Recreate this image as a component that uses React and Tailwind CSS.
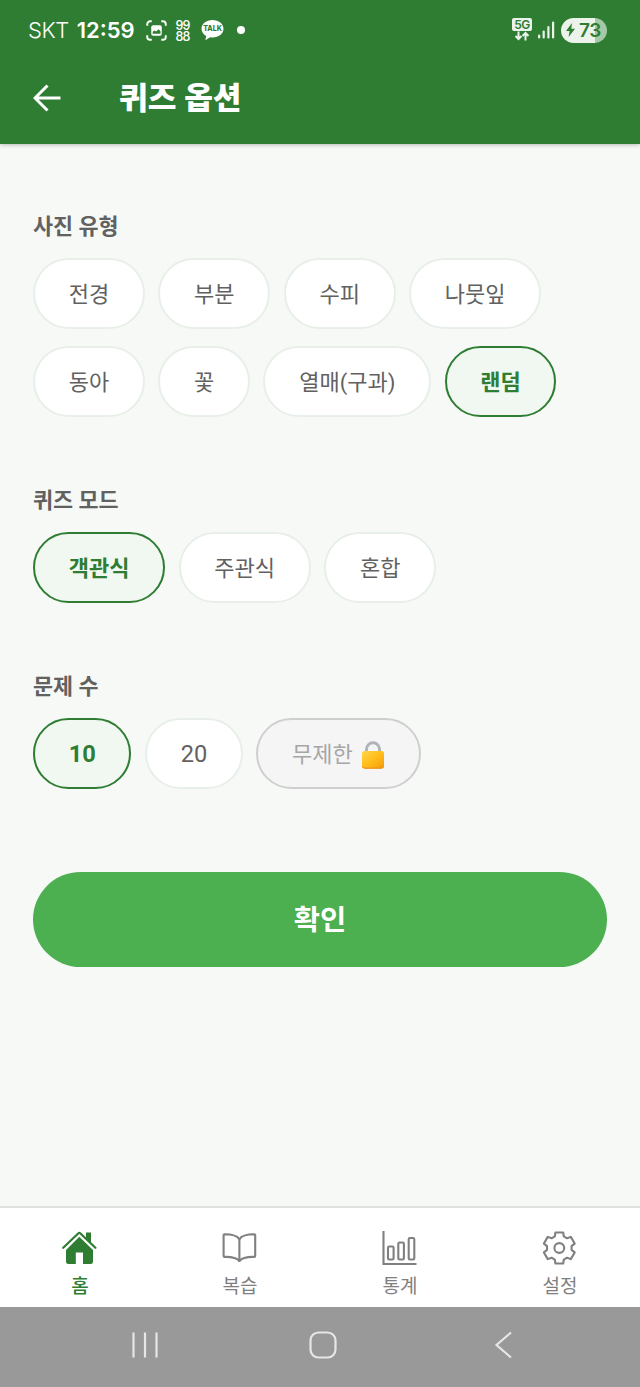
import React, { useState } from 'react'

const PHOTO_TYPES = ['전경', '부분', '수피', '나뭇잎', '동아', '꽃', '열매(구과)', '랜덤']
const QUIZ_MODES = ['객관식', '주관식', '혼합']
const COUNTS = ['10', '20']

// outline of a six-toothed gear around (17.3, 18)
const GEAR_POINTS = [0, 60, 120, 180, 240, 300]
    .flatMap((a) => [[a - 21.5, 12.4], [a - 14, 16], [a + 14, 16], [a + 21.5, 12.4]])
    .map(([deg, r]) => {
        const rad = (deg * Math.PI) / 180
        return `${(17.3 + r * Math.sin(rad)).toFixed(2)},${(18 - r * Math.cos(rad)).toFixed(2)}`
    })
    .join(' ')

const HomeIcon = () => (
    <svg width="36" height="36" viewBox="0 0 36 36" fill="currentColor">
        <path d="M24 2.500h5v11l-5-4.500z" />
        <path d="M1.200 17.800 16.400 3.200q.9-.8 1.800 0L33.400 17.800" fill="none" stroke="currentColor" strokeWidth="2.200" strokeLinecap="round" />
        <path d="M17.300 6.800 31 20v11.700a2.300 2.300 0 0 1-2.300 2.300H21V22.500h-7.200V34H6.300A2.300 2.300 0 0 1 4 31.700V20z" />
    </svg>
)

const BookIcon = () => (
    <svg width="36" height="36" viewBox="0 0 36 36" fill="none" stroke="currentColor" strokeWidth="2.100" strokeLinejoin="round" strokeLinecap="round">
        <path d="M17.400 9.300C15.200 5.600 9.500 4.300 2.500 4.300q-.9 0-.9.9V26q0 .9.9.9C9 26.700 14.500 27.500 17.400 31c2.900-3.500 8.400-4.300 14.900-4.100q.9 0 .9-.9V5.200q0-.9-.9-.9C25.300 4.300 19.600 5.600 17.400 9.300z" />
        <path d="M17.400 9.300V31" />
    </svg>
)

const ChartIcon = () => (
    <svg width="36" height="36" viewBox="0 0 36 36" fill="none" stroke="currentColor" strokeWidth="2.100">
        <path d="M1.500 1v33h33" />
        <rect x="6" y="16.500" width="5.600" height="13" rx="1.300" />
        <rect x="16.300" y="12.500" width="5.600" height="17" rx="1.300" />
        <rect x="26.700" y="8" width="5.600" height="21.500" rx="1.300" />
    </svg>
)

const GearIcon = () => (
    <svg width="36" height="36" viewBox="0 0 36 36" fill="none" stroke="currentColor" strokeWidth="2.100" strokeLinejoin="round">
        <polygon points={GEAR_POINTS} />
        <circle cx="17.300" cy="18" r="4.900" />
    </svg>
)

const TABS = [
    { label: '홈', Icon: HomeIcon },
    { label: '복습', Icon: BookIcon },
    { label: '통계', Icon: ChartIcon },
    { label: '설정', Icon: GearIcon },
]

const StatusBar = () => (
    <div className="flex h-[60px] items-center pl-[28px] pr-[33px] text-white">
        <span className="font-['Inter'] text-[22px] font-light leading-none tracking-[-0.5px]">SKT</span>
        <span className="ml-[8px] font-['Inter'] text-[22px] font-semibold leading-none">12:59</span>

        {/* screen capture */}
        <svg className="ml-[11px]" width="21" height="21" viewBox="0 0 22 22" fill="none">
            <path d="M1.3 6V4.3a3 3 0 0 1 3-3H6M16 1.3h1.7a3 3 0 0 1 3 3V6M20.7 16v1.7a3 3 0 0 1-3 3H16M6 20.7H4.3a3 3 0 0 1-3-3V16"
                stroke="currentColor" strokeWidth="2" />
            <rect x="5.5" y="5.500" width="11" height="11" rx="2" fill="currentColor" />
            <path d="M7 14.500v-2.200l2-1.300 1.600 1 2.600-2.200 2 2v2.700z" fill="#2e7d32" />
        </svg>

        <span className="ml-[8px] flex w-[16px] flex-col items-center pt-[2px] font-['Inter'] text-[12.500px] font-medium leading-[11.500px] tracking-[-0.700px]">
            <span>99</span>
            <span>88</span>
        </span>

        {/* talk bubble */}
        <svg className="ml-[10px]" width="23" height="22" viewBox="0 0 23 22">
            <path d="M11.5 1C5.4 1 .5 4.8.5 9.700c0 3.200 2 5.800 4.700 7.300l-.8 4.200 4.700-3c.8.1 1.600.2 2.400.2 6.100 0 11-3.800 11-8.700S17.600 1 11.500 1z" fill="currentColor" />
            <text x="11.500" y="12.300" textAnchor="middle" fill="#2e7d32" className="font-['Inter'] text-[7px] font-extrabold">TALK</text>
        </svg>
        <span className="ml-[13px] size-[8px] rounded-full bg-white" />

        <div className="ml-auto flex items-center">
            <div className="flex flex-col items-center pb-[1px]">
                <span className="flex h-[13px] w-[20px] items-center justify-center rounded-[2px] bg-[#ebf3eb] font-['Inter'] text-[12px] font-semibold leading-none tracking-[-0.500px] text-[#2e7d32]">
                    5G
                </span>
                <svg width="16" height="10" viewBox="0 0 16 10" fill="none" stroke="#ebf3eb" strokeWidth="2">
                    <path d="M4.500 0.500v7.500M1.500 5l3 3 3-3M11.500 9.500V2M8.500 5l3-3 3 3" />
                </svg>
            </div>
            <svg className="ml-[6px]" width="18" height="18" viewBox="0 0 18 18" fill="#ebf3eb">
                <rect x="0" y="13.500" width="2.200" height="4" rx="1" />
                <rect x="4.600" y="9.500" width="2.200" height="8" rx="1" />
                <rect x="9.300" y="5" width="2.200" height="12.500" rx="1" />
                <rect x="14" y="0.500" width="2.200" height="17" rx="1" />
            </svg>
            <div className="ml-[5px] flex h-[25px] w-[46px] items-center gap-[4px] rounded-full bg-[linear-gradient(90deg,#ebf3eb_73%,#a5c9a7_73%)] pl-[5px] text-[#2e7d32]">
                <svg width="9" height="14" viewBox="0 0 9 14" fill="currentColor">
                    <path d="M6 0 0 8h3.600L2.600 14 9 5.700H5.300z" />
                </svg>
                <span className="font-['Inter'] text-[19px] font-semibold leading-none tracking-[-0.500px]">73</span>
            </div>
        </div>
    </div>
)

const Chip = ({ selected, locked, onClick, children }) => {
    let look = 'border-[#e8efe8] bg-white text-[#616161]'
    if (selected) look = 'border-[#2e7d32] bg-[#f1f8f2] font-bold text-[#2e7d32]'
    if (locked) look = 'border-[#cfcfcf] bg-[#f5f5f5] text-[#a6a6a6]'

    return (
        <button
            onClick={onClick}
            disabled={locked}
            className={`flex h-[71px] items-center rounded-[36px] border-2 px-[33.700px] pt-[2px] text-[22px] leading-none ${look}`}>
            {children}
        </button>
    )
}

const Section = ({ title, children }) => (
    <section>
        <h2 className="text-[21.800px] font-bold leading-[32px] text-[#616161]">{title}</h2>
        <div className="mt-[15px] flex flex-wrap gap-x-[13.500px] gap-y-[17px]">{children}</div>
    </section>
)

const LockIcon = () => (
    <svg width="24" height="30" viewBox="0 0 24 30">
        <defs>
            <linearGradient id="lockBody" x1="0" y1="0" x2="1" y2="1">
                <stop offset="0" stopColor="#ffd54a" />
                <stop offset="0.500" stopColor="#ffbd18" />
                <stop offset="1" stopColor="#f59a0c" />
            </linearGradient>
        </defs>
        <path d="M5.500 13V9.300a6.500 6.500 0 0 1 13 0V13" fill="none" stroke="#b0b4b8" strokeWidth="3" />
        <rect x="1" y="11" width="22" height="17.500" rx="2.500" fill="url(#lockBody)" />
        <path d="M1.500 26.200q.5 2 2.500 2h16q2 0 2.500-2" fill="none" stroke="#e8890c" />
    </svg>
)

const App = () => {
    const [photoType, setPhotoType] = useState('랜덤')
    const [mode, setMode] = useState('객관식')
    const [count, setCount] = useState('10')
    const [tab, setTab] = useState('홈')

    return (
        <div className="flex h-[1387px] w-[640px] flex-col bg-[#f7f9f7] font-['Roboto','Noto_Sans_CJK_KR',sans-serif]">
            <header className="h-[144px] bg-[#2e7d32] shadow-[0_1px_4px_rgba(0,0,0,0.250)]">
                <StatusBar />
                <div className="flex h-[75px] items-center pl-[33px] text-white">
                    <svg width="29" height="28" viewBox="0 0 29 28" fill="none" stroke="currentColor" strokeWidth="3">
                        <path d="M14.500 1.500 2 14l12.500 12.500M2 14h25.500" />
                    </svg>
                    <h1 className="ml-[57px] pt-[2px] text-[31.200px] font-black leading-none">퀴즈 옵션</h1>
                </div>
            </header>

            <main className="flex flex-1 flex-col px-[33px] pt-[67px]">
                <div className="flex flex-col gap-[68px]">
                    <Section title="사진 유형">
                        {PHOTO_TYPES.map((t) => (
                            <Chip key={t} selected={t === photoType} onClick={() => setPhotoType(t)}>{t}</Chip>
                        ))}
                    </Section>
                    <Section title="퀴즈 모드">
                        {QUIZ_MODES.map((m) => (
                            <Chip key={m} selected={m === mode} onClick={() => setMode(m)}>{m}</Chip>
                        ))}
                    </Section>
                    <Section title="문제 수">
                        {COUNTS.map((c) => (
                            <Chip key={c} selected={c === count} onClick={() => setCount(c)}>
                                <span className="text-[23.600px]">{c}</span>
                            </Chip>
                        ))}
                        <Chip locked>
                            <span className="mr-[8.500px]">무제한</span>
                            <LockIcon />
                        </Chip>
                    </Section>
                </div>

                <button className="mt-[83px] h-[95px] shrink-0 rounded-full bg-[#4caf50] pt-[4px] text-[28.500px] font-bold leading-none text-white">
                    확인
                </button>
            </main>

            <nav className="grid h-[101px] grid-cols-4 border-t-2 border-[#e0e0e0] bg-white">
                {TABS.map(({ label, Icon }) => (
                    <button
                        key={label}
                        onClick={() => setTab(label)}
                        className={`flex flex-col items-center pt-[22px] text-[19px] ${
                            tab === label ? 'font-medium text-[#2e7d32]' : 'text-[#808080]'}`}>
                        <Icon />
                        <span className="mt-[7px] leading-[28px]">{label}</span>
                    </button>
                ))}
            </nav>

            <div className="flex h-[80px] items-center bg-[#999999] pb-[4px] pl-[132px] text-[#e6e6e6]">
                <svg width="26" height="28" viewBox="0 0 26 28" stroke="currentColor" strokeWidth="2.200">
                    <path d="M1.500 1.500v25M13 1.500v25M24.500 1.500v25" />
                </svg>
                <svg className="ml-[151px]" width="28" height="28" viewBox="0 0 28 28" fill="none" stroke="currentColor" strokeWidth="2.200">
                    <rect x="1.500" y="1.500" width="25" height="25" rx="8" />
                </svg>
                <svg className="ml-[157px]" width="18" height="28" viewBox="0 0 18 28" fill="none" stroke="currentColor" strokeWidth="2.200">
                    <path d="M17 1.500 2.500 14 17 26.500" />
                </svg>
            </div>
        </div>
    )
}

export default App
